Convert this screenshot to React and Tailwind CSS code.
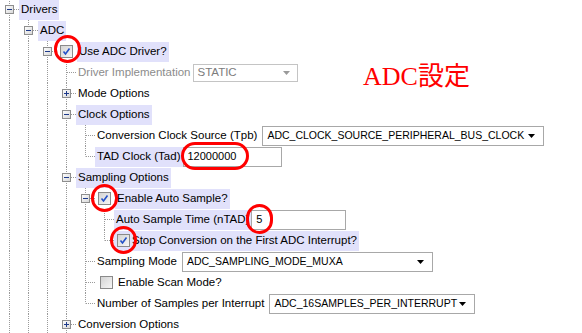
import React from 'react';

const Guide = ({ on }) => (
    <svg width="19" height="21" className="shrink-0">
        {on && <line x1="9.5" y1="0" x2="9.5" y2="21" stroke="#9a9a9a" strokeDasharray="1 1" />}
    </svg>
);

const Connector = ({ hasNext, exp }) => (
    <svg width="19" height="21" className="shrink-0">
        <line x1="9.5" y1="0" x2="9.5" y2={hasNext ? 21 : 10.5} stroke="#9a9a9a" strokeDasharray="1 1" />
        <line x1="10" y1="10.5" x2="19" y2="10.5" stroke="#9a9a9a" strokeDasharray="1 1" />
        {exp && (
            <g>
                <defs>
                    <linearGradient id="expg" x1="0" y1="0" x2="1" y2="1">
                        <stop offset="0" stopColor="#ffffff" />
                        <stop offset="1" stopColor="#d6d6d6" />
                    </linearGradient>
                </defs>
                <rect x="5.5" y="6.5" width="8" height="8" fill="url(#expg)" stroke="#8e8e8e" />
                <line x1="7" y1="10.5" x2="12" y2="10.5" stroke="#1e3a8a" />
                {exp === '+' && <line x1="9.5" y1="8" x2="9.5" y2="13" stroke="#1e3a8a" />}
            </g>
        )}
    </svg>
);

const Check = ({ checked }) => (
    <svg width="13" height="13" className="shrink-0">
        <defs>
            <linearGradient id="chkg" x1="0" y1="0" x2="1" y2="1">
                <stop offset="0" stopColor="#d2d2d2" />
                <stop offset="1" stopColor="#f8f8f8" />
            </linearGradient>
        </defs>
        <rect x="0.5" y="0.5" width="12" height="12" fill="url(#chkg)" stroke="#8a8a8a" />
        {checked && <path d="M3.5 6.5 L5.5 9 L9.5 3.5" fill="none" stroke="#2350c8" strokeWidth="1.6" />}
    </svg>
);

const Arrow = ({ color = '#000' }) => (
    <svg width="7" height="4" className="shrink-0">
        <polygon points="0,0 7,0 3.5,4" fill={color} />
    </svg>
);

const Label = ({ hl, gray, children }) => (
    <span className={`flex h-[20px] items-center px-[2px] whitespace-nowrap ${hl ? 'bg-[#e1e1fb]' : ''} ${gray ? 'text-[#8c8c8c]' : 'text-black'}`}>
        {children}
    </span>
);

const Select = ({ value, w }) => (
    <div className={`ml-[3px] flex h-[20px] shrink-0 items-center justify-between border border-[#a8a8a8] bg-white pl-[4px] pr-[8px] ${w}`}>
        <span className="whitespace-nowrap text-[10.5px]">{value}</span>
        <Arrow />
    </div>
);

const Input = ({ value, w }) => (
    <div className={`flex h-[20px] shrink-0 items-center border border-[#a8a8a8] bg-white pl-[4px] text-[11px] ${w}`}>
        {value}
    </div>
);

const Row = ({ guides, hasNext, exp, children }) => (
    <div className="flex h-[21px] items-center">
        {guides.map((g, i) => <Guide key={i} on={g} />)}
        <Connector hasNext={hasNext} exp={exp} />
        {children}
    </div>
);

const Ring = ({ className }) => (
    <div className={`absolute rounded-full border-[3px] border-[#ff0000] ${className}`} />
);

const g3 = [true, true, true];
const g4 = [true, true, true, true];
const g5 = [true, true, true, true, true];

export default function App() {
    return (
        <div className="relative h-[333px] w-[582px] overflow-hidden bg-white font-['Liberation_Sans',Arial,sans-serif] text-[11.5px] leading-none text-black">
            <div className="-mt-px flex flex-col">
                <Row guides={[]} hasNext exp="-">
                    <Label hl>Drivers</Label>
                </Row>
                <Row guides={[true]} hasNext exp="-">
                    <Label hl>ADC</Label>
                </Row>
                <Row guides={[true, true]} hasNext exp="-">
                    <span className="ml-[3px] mr-[4px]"><Check checked /></span>
                    <Label hl>Use ADC Driver?</Label>
                </Row>
                <Row guides={g3} hasNext>
                    <Label gray>Driver Implementation</Label>
                    <div className="ml-[1px] flex h-[18px] w-[105px] items-center justify-between border border-[#c4c4c4] bg-white pl-[3px] pr-[7px] text-[#7c7c7c]">
                        <span>STATIC</span>
                        <Arrow color="#9a9a9a" />
                    </div>
                </Row>
                <Row guides={g3} hasNext exp="+">
                    <Label>Mode Options</Label>
                </Row>
                <Row guides={g3} hasNext exp="-">
                    <Label hl>Clock Options</Label>
                </Row>
                <Row guides={g4} hasNext>
                    <Label>Conversion Clock Source (Tpb)</Label>
                    <Select value="ADC_CLOCK_SOURCE_PERIPHERAL_BUS_CLOCK" w="w-[282px]" />
                </Row>
                <Row guides={g4} hasNext={false}>
                    <Label hl>TAD Clock (Tad)</Label>
                    <Input value="12000000" w="w-[99px]" />
                </Row>
                <Row guides={g3} hasNext exp="-">
                    <Label hl>Sampling Options</Label>
                </Row>
                <Row guides={g4} hasNext exp="-">
                    <span className="ml-[3px] mr-[4px]"><Check checked /></span>
                    <Label hl>Enable Auto Sample?</Label>
                </Row>
                <Row guides={g5} hasNext>
                    <Label hl>Auto Sample Time (nTAD)</Label>
                    <Input value="5" w="w-[95px]" />
                </Row>
                <Row guides={g5} hasNext={false}>
                    <div className="flex h-[20px] items-center bg-[#e1e1fb] pl-[3px]">
                        <Check checked />
                        <Label hl>Stop Conversion on the First ADC Interrupt?</Label>
                    </div>
                </Row>
                <Row guides={g4} hasNext>
                    <Label>Sampling Mode</Label>
                    <Select value="ADC_SAMPLING_MODE_MUXA" w="w-[251px]" />
                </Row>
                <Row guides={g4} hasNext>
                    <span className="ml-[5px] mr-[3px]"><Check /></span>
                    <Label>Enable Scan Mode?</Label>
                </Row>
                <Row guides={g4} hasNext={false}>
                    <Label>Number of Samples per Interrupt</Label>
                    <Select value="ADC_16SAMPLES_PER_INTERRUPT" w="w-[206px]" />
                </Row>
                <Row guides={g3} hasNext exp="+">
                    <Label>Conversion Options</Label>
                </Row>
            </div>

            <div className="absolute left-[363px] top-[64px] font-['Liberation_Serif','Noto_Sans_CJK_JP',serif] text-[26px] leading-none text-[#ff0000]">
                ADC設定
            </div>

            <Ring className="left-[54px] top-[35px] h-[28px] w-[27px]" />
            <Ring className="left-[181px] top-[142px] h-[28px] w-[68px]" />
            <Ring className="left-[91px] top-[184px] h-[28px] w-[27px]" />
            <Ring className="left-[246px] top-[204px] h-[30px] w-[27px]" />
            <Ring className="left-[110px] top-[226px] h-[28px] w-[27px]" />
        </div>
    );
}
